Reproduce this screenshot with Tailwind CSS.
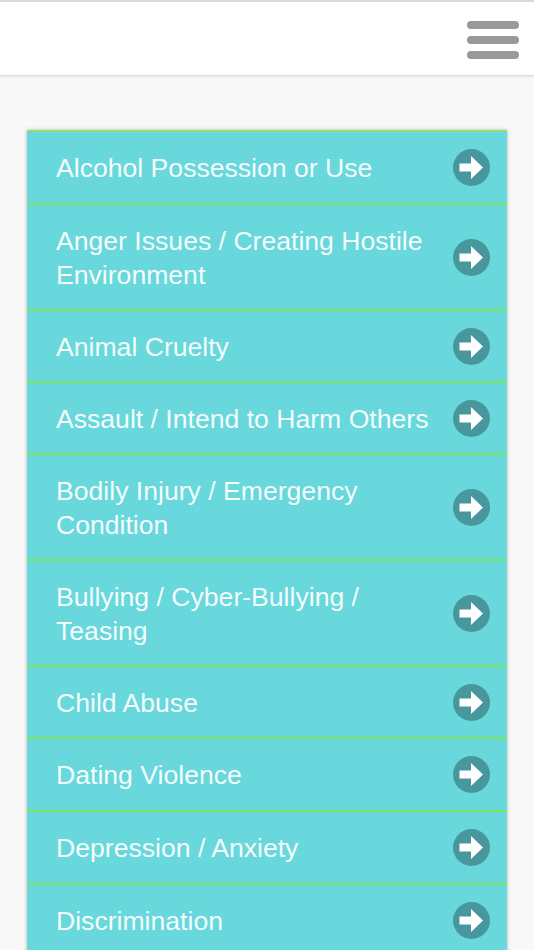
<!DOCTYPE html>
<html lang="en">
<head>
  <meta charset="UTF-8" />
  <meta name="viewport" content="width=device-width, initial-scale=1.0" />
  <title>Report Topics</title>
  <script src="https://cdn.jsdelivr.net/npm/@tailwindcss/browser@4"></script>
</head>
<body class="bg-[#f8f8f8] h-[950px] overflow-hidden font-['Liberation_Sans',sans-serif]">
  <!-- header -->
  <header class="h-[76px] bg-white border-t-2 border-b border-t-[#d9d9d9] border-b-[#dcdcdc] shadow-[0_1px_3px_rgba(0,0,0,0.08)] flex justify-end pt-[19px] pr-[15px]">
    <div class="w-[52px] flex flex-col gap-[7px] blur-[0.4px]">
      <span class="h-[8px] rounded-full bg-[#999999]"></span>
      <span class="h-[8px] rounded-full bg-[#999999]"></span>
      <span class="h-[8px] rounded-full bg-[#999999]"></span>
    </div>
  </header>

  <!-- list -->
  <main class="mt-[54px] mx-[27px] w-[480px] bg-[#68d8dd] border-t-2 border-[#8ae06a] shadow-[0_0_4px_rgba(0,0,0,0.25)]">
    <a class="flex items-center justify-between h-[73px] pl-[29px] pr-[17px] border-b-2 border-[#7ee55c]"><span class="w-[385px] pt-[2px] text-[26.6px] leading-[33.5px] text-white/95">Alcohol Possession or Use</span><svg class="w-[37px] h-[37px] shrink-0" viewBox="0 0 37 37"><circle cx="18.5" cy="18.5" r="18.5" fill="#48979c"/><path d="M6.5 14.5h11.5V7L30 18.5 18 30v-7.5H6.5z" fill="#fff"/></svg></a>
    <a class="flex items-center justify-between h-[106px] pl-[29px] pr-[17px] border-b-2 border-[#7ee55c]"><span class="w-[385px] pt-[3px] text-[26.6px] leading-[33.5px] text-white/95">Anger Issues / Creating Hostile Environment</span><svg class="w-[37px] h-[37px] shrink-0" viewBox="0 0 37 37"><circle cx="18.5" cy="18.5" r="18.5" fill="#48979c"/><path d="M6.5 14.5h11.5V7L30 18.5 18 30v-7.5H6.5z" fill="#fff"/></svg></a>
    <a class="flex items-center justify-between h-[72px] pl-[29px] pr-[17px] border-b-2 border-[#7ee55c]"><span class="w-[385px] pt-[3px] text-[26.6px] leading-[33.5px] text-white/95">Animal Cruelty</span><svg class="w-[37px] h-[37px] shrink-0" viewBox="0 0 37 37"><circle cx="18.5" cy="18.5" r="18.5" fill="#48979c"/><path d="M6.5 14.5h11.5V7L30 18.5 18 30v-7.5H6.5z" fill="#fff"/></svg></a>
    <a class="flex items-center justify-between h-[72px] pl-[29px] pr-[17px] border-b-2 border-[#7ee55c]"><span class="w-[385px] pt-[3px] text-[26.6px] leading-[33.5px] text-white/95">Assault / Intend to Harm Others</span><svg class="w-[37px] h-[37px] shrink-0" viewBox="0 0 37 37"><circle cx="18.5" cy="18.5" r="18.5" fill="#48979c"/><path d="M6.5 14.5h11.5V7L30 18.5 18 30v-7.5H6.5z" fill="#fff"/></svg></a>
    <a class="flex items-center justify-between h-[106px] pl-[29px] pr-[17px] border-b-2 border-[#7ee55c]"><span class="w-[385px] pt-[3px] text-[26.6px] leading-[33.5px] text-white/95">Bodily Injury / Emergency Condition</span><svg class="w-[37px] h-[37px] shrink-0" viewBox="0 0 37 37"><circle cx="18.5" cy="18.5" r="18.5" fill="#48979c"/><path d="M6.5 14.5h11.5V7L30 18.5 18 30v-7.5H6.5z" fill="#fff"/></svg></a>
    <a class="flex items-center justify-between h-[106px] pl-[29px] pr-[17px] border-b-2 border-[#7ee55c]"><span class="w-[385px] pt-[3px] text-[26.6px] leading-[33.5px] text-white/95">Bullying / Cyber-Bullying / Teasing</span><svg class="w-[37px] h-[37px] shrink-0" viewBox="0 0 37 37"><circle cx="18.5" cy="18.5" r="18.5" fill="#48979c"/><path d="M6.5 14.5h11.5V7L30 18.5 18 30v-7.5H6.5z" fill="#fff"/></svg></a>
    <a class="flex items-center justify-between h-[72px] pl-[29px] pr-[17px] border-b-2 border-[#7ee55c]"><span class="w-[385px] pt-[3px] text-[26.6px] leading-[33.5px] text-white/95">Child Abuse</span><svg class="w-[37px] h-[37px] shrink-0" viewBox="0 0 37 37"><circle cx="18.5" cy="18.5" r="18.5" fill="#48979c"/><path d="M6.5 14.5h11.5V7L30 18.5 18 30v-7.5H6.5z" fill="#fff"/></svg></a>
    <a class="flex items-center justify-between h-[73px] pl-[29px] pr-[17px] border-b-2 border-[#7ee55c]"><span class="w-[385px] pt-[3px] text-[26.6px] leading-[33.5px] text-white/95">Dating Violence</span><svg class="w-[37px] h-[37px] shrink-0" viewBox="0 0 37 37"><circle cx="18.5" cy="18.5" r="18.5" fill="#48979c"/><path d="M6.5 14.5h11.5V7L30 18.5 18 30v-7.5H6.5z" fill="#fff"/></svg></a>
    <a class="flex items-center justify-between h-[73px] pl-[29px] pr-[17px] border-b-2 border-[#7ee55c]"><span class="w-[385px] pt-[3px] text-[26.6px] leading-[33.5px] text-white/95">Depression / Anxiety</span><svg class="w-[37px] h-[37px] shrink-0" viewBox="0 0 37 37"><circle cx="18.5" cy="18.5" r="18.5" fill="#48979c"/><path d="M6.5 14.5h11.5V7L30 18.5 18 30v-7.5H6.5z" fill="#fff"/></svg></a>
    <a class="flex items-center justify-between h-[73px] pl-[29px] pr-[17px] border-b-2 border-[#7ee55c]"><span class="w-[385px] pt-[3px] text-[26.6px] leading-[33.5px] text-white/95">Discrimination</span><svg class="w-[37px] h-[37px] shrink-0" viewBox="0 0 37 37"><circle cx="18.5" cy="18.5" r="18.5" fill="#48979c"/><path d="M6.5 14.5h11.5V7L30 18.5 18 30v-7.5H6.5z" fill="#fff"/></svg></a>
  </main>
</body>
</html>
